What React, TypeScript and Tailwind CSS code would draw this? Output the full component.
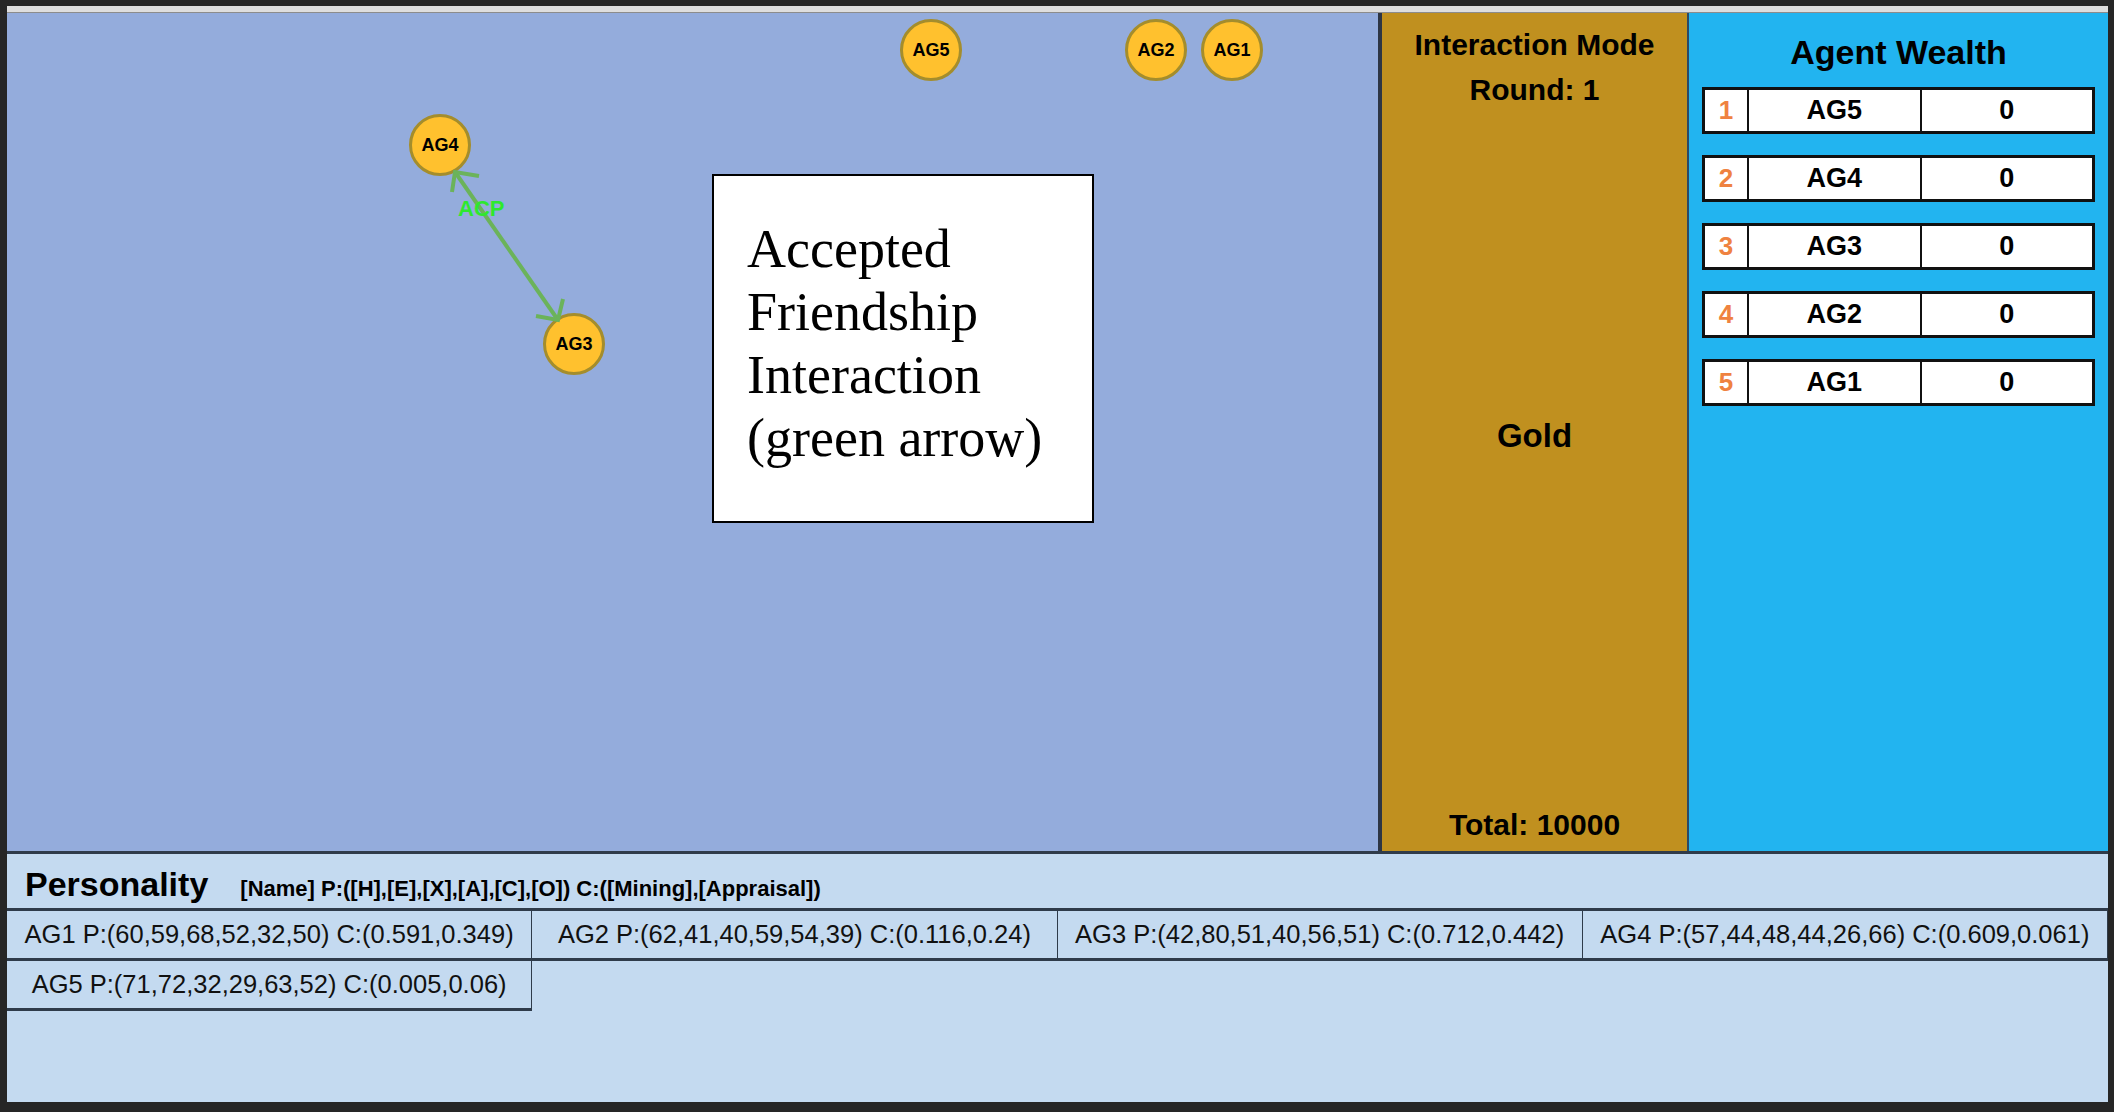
import React from "react";

type Node = { id: string; left: number; top: number };

const nodes: Node[] = [
  { id: "AG5", left: 893, top: 6 },
  { id: "AG2", left: 1118, top: 6 },
  { id: "AG1", left: 1194, top: 6 },
  { id: "AG4", left: 402, top: 101 },
  { id: "AG3", left: 536, top: 300 },
];

const wealth = [
  { rank: 1, name: "AG5", value: 0 },
  { rank: 2, name: "AG4", value: 0 },
  { rank: 3, name: "AG3", value: 0 },
  { rank: 4, name: "AG2", value: 0 },
  { rank: 5, name: "AG1", value: 0 },
];

const personalities = [
  "AG1 P:(60,59,68,52,32,50) C:(0.591,0.349)",
  "AG2 P:(62,41,40,59,54,39) C:(0.116,0.24)",
  "AG3 P:(42,80,51,40,56,51) C:(0.712,0.442)",
  "AG4 P:(57,44,48,44,26,66) C:(0.609,0.061)",
  "AG5 P:(71,72,32,29,63,52) C:(0.005,0.06)",
];

function Agent({ node }: { node: Node }) {
  return (
    <div
      className="absolute w-[62px] h-[62px] rounded-full bg-[#ffc12e] border-[3px] border-[#a48d2c] flex items-center justify-center text-[18px] font-bold text-black leading-none"
      style={{ left: node.left, top: node.top }}
    >
      {node.id}
    </div>
  );
}

export default function App() {
  return (
    <div className="w-[2114px] h-[1112px] bg-[#262626] pt-[6px] pl-[7px] pr-[6px] pb-[10px] flex flex-col overflow-hidden font-['Liberation_Sans',Arial,sans-serif] text-black">
      <div className="h-[7px] bg-[#dedede] border-b-[1.5px] border-[#8c8c8c]" />
      <div className="flex h-[841px] border-b-[3px] border-[#2f3b4a]">
        {/* Canvas */}
        <div className="relative w-[1375px] h-full bg-[#94acdc] border-r-[4px] border-[#2d3544]">
          {nodes.map((n) => (
            <Agent key={n.id} node={n} />
          ))}
          <svg className="absolute inset-0 w-full h-full pointer-events-none" width="1371" height="838">
            <line x1="448" y1="159" x2="551" y2="307" stroke="#6bb35a" strokeWidth="4" />
            <polyline points="472,163 448,159 445,179" fill="none" stroke="#6bb35a" strokeWidth="4" />
            <polyline points="556,286 551,307 529,303" fill="none" stroke="#6bb35a" strokeWidth="4" />
          </svg>
          <div className="absolute left-[451px] top-[185px] text-[22px] leading-none font-bold text-[#2ee82e]">
            ACP
          </div>
          <div className="absolute left-[705px] top-[161px] w-[382px] h-[349px] bg-white border-2 border-black pl-[33px] pt-[42px] font-['Liberation_Serif','Times_New_Roman',serif] text-[54px] leading-[63px] text-black">
            <div>Accepted</div>
            <div>Friendship</div>
            <div>Interaction</div>
            <div>(green arrow)</div>
          </div>
        </div>

        {/* Gold panel */}
        <div className="w-[307px] h-full bg-[#c0901f] border-r-2 border-[#2b4a66] flex flex-col font-bold text-center">
          <div className="h-[99px] pt-[9px] text-[30px] leading-[45px]">
            <div>Interaction Mode</div>
            <div>Round: 1</div>
          </div>
          <div className="flex-1 flex items-center justify-center pt-[6px] text-[33px] leading-none">
            Gold
          </div>
          <div className="h-[99px] flex items-end justify-center pb-[4px] text-[30px] leading-[45px]">
            Total: 10000
          </div>
        </div>

        {/* Agent Wealth */}
        <div className="flex-1 h-full bg-[#22b4f0] pt-[19px] px-[13px] flex flex-col">
          <div className="text-center text-[34px] leading-[40px] font-bold">Agent Wealth</div>
          <div className="mt-[15px] flex flex-col gap-[21px]">
            {wealth.map((w) => (
              <div key={w.rank} className="h-[47px] flex border-[3px] border-[#111] bg-white font-bold">
                <div className="w-[44px] border-r-2 border-[#111] flex items-center justify-center text-[26px] text-[#ef8240]">
                  {w.rank}
                </div>
                <div className="flex-1 border-r-2 border-[#111] flex items-center justify-center text-[27px]">
                  {w.name}
                </div>
                <div className="flex-1 flex items-center justify-center text-[27px]">{w.value}</div>
              </div>
            ))}
          </div>
        </div>
      </div>

      {/* Personality panel */}
      <div className="flex-1 bg-[#c4daf0] flex flex-col">
        <div className="h-[57px] border-b-[3px] border-[#2f3b4a] pl-[18px] pt-[13px] flex items-baseline gap-[32px] font-bold">
          <span className="text-[34px] leading-none">Personality</span>
          <span className="text-[22px] leading-none">[Name] P:([H],[E],[X],[A],[C],[O]) C:([Mining],[Appraisal])</span>
        </div>
        <div className="grid grid-cols-4">
          {personalities.map((p) => (
            <div
              key={p}
              className="h-[50px] border-b-[3px] border-r border-[#2f3b4a] flex items-center justify-center text-[25.5px] text-[#111] whitespace-nowrap"
            >
              {p}
            </div>
          ))}
        </div>
      </div>
    </div>
  );
}
